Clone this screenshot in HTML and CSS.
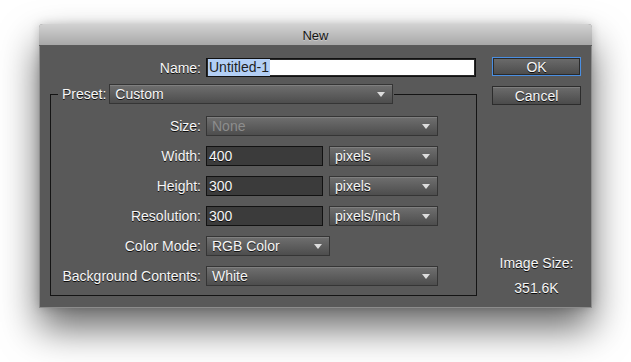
FILE: index.html
```html
<!DOCTYPE html>
<html lang="en">
<head>
    <meta charset="UTF-8">
    <meta name="viewport" content="width=device-width, initial-scale=1.0">
    <title>New</title>
    <link rel="stylesheet" href="styles.css">
</head>
<body>
    <div class="stage">
        <div class="dialog">
            <div class="titlebar">New</div>
            <div class="dialog-body">
                <div class="form">
                    <div class="name-row">
                        <label class="label">Name:</label>
                        <div class="text-field"><span class="selection">Untitled-1</span></div>
                    </div>
                    <fieldset class="preset">
                        <legend class="preset-legend">
                            <span class="legend-label">Preset:</span>
                            <div class="select select-preset"><span class="value">Custom</span><span class="arrow"></span></div>
                        </legend>
                        <div class="row">
                            <label class="label">Size:</label>
                            <div class="select select-wide disabled"><span class="value">None</span><span class="arrow"></span></div>
                        </div>
                        <div class="row">
                            <label class="label">Width:</label>
                            <div class="num-field">400</div>
                            <div class="select select-unit"><span class="value">pixels</span><span class="arrow"></span></div>
                        </div>
                        <div class="row">
                            <label class="label">Height:</label>
                            <div class="num-field">300</div>
                            <div class="select select-unit"><span class="value">pixels</span><span class="arrow"></span></div>
                        </div>
                        <div class="row">
                            <label class="label">Resolution:</label>
                            <div class="num-field">300</div>
                            <div class="select select-unit"><span class="value">pixels/inch</span><span class="arrow"></span></div>
                        </div>
                        <div class="row">
                            <label class="label">Color Mode:</label>
                            <div class="select select-mode"><span class="value">RGB Color</span><span class="arrow"></span></div>
                        </div>
                        <div class="row">
                            <label class="label">Background Contents:</label>
                            <div class="select select-wide"><span class="value">White</span><span class="arrow"></span></div>
                        </div>
                    </fieldset>
                </div>
                <div class="side">
                    <button class="btn btn-default">OK</button>
                    <button class="btn">Cancel</button>
                    <div class="image-size">
                        <div>Image Size:</div>
                        <div>351.6K</div>
                    </div>
                </div>
            </div>
        </div>
    </div>
</body>
</html>
```

FILE: styles.css
```css
html, body {
    height: 100%;
}
body {
    margin: 0;
    background-color: #fff;
    font-family: "Liberation Sans", Arial, sans-serif;
    font-size: 14px;
    color: #f7f7f7;
    overflow: hidden;
}
.stage {
    box-sizing: border-box;
    height: 362px;
    padding: 24px 0 0 39px;
}
.dialog {
    box-sizing: border-box;
    width: 553px;
    height: 284px;
    display: flex;
    flex-direction: column;
    background-color: #595959;
    border: 1px solid #8c8c8c;
    border-top: none;
    border-radius: 4px 4px 0 0;
    box-shadow: 0 20px 38px rgba(0, 0, 0, 0.6), 0 0 10px rgba(0, 0, 0, 0.18);
}
.titlebar {
    height: 22px;
    line-height: 23px;
    margin: 0 -1px;
    text-align: center;
    font-size: 13px;
    color: #141414;
    text-shadow: 0 1px 0 rgba(255, 255, 255, 0.35);
    background: linear-gradient(#d2d2d2, #a8a8a8);
    border-radius: 4px 4px 0 0;
    border-bottom: 1px solid #5a5a5a;
    box-sizing: border-box;
}
.dialog-body {
    flex: 1;
    display: flex;
    gap: 15px;
    padding: 11px 10px 6px 10px;
}
.form {
    width: 427px;
}
.label {
    text-align: right;
    text-shadow: 0 1px 0 rgba(0, 0, 0, 0.85);
    white-space: nowrap;
}
.name-row {
    display: flex;
    align-items: center;
    gap: 5px;
    margin-top: 1px;
    height: 19px;
}
.name-row .label {
    width: 151px;
}
.text-field {
    box-sizing: border-box;
    width: 270px;
    height: 19px;
    line-height: 17px;
    padding-left: 1px;
    background-color: #fff;
    border: 1px solid #111;
    box-shadow: inset 0 0 0 1px #2a2a2a;
    color: #1f1f1f;
}
.selection {
    display: inline-block;
    background-color: #b3cff5;
    padding: 0 1px;
}
.preset {
    margin: 7px 0 0;
    padding: 12px 0 9px;
    border: 1px solid #141414;
    display: flex;
    flex-direction: column;
    gap: 10px;
}
.preset-legend {
    display: flex;
    align-items: center;
    gap: 3px;
    margin-left: 7px;
    padding: 0 1px 0 4px;
}
.legend-label {
    text-shadow: 0 1px 0 rgba(0, 0, 0, 0.85);
}
.row {
    display: flex;
    align-items: center;
    height: 20px;
}
.row .label {
    width: 150px;
    margin-right: 5px;
}
.select {
    box-sizing: border-box;
    height: 20px;
    display: flex;
    align-items: center;
    padding: 0 7px 0 5px;
    background: linear-gradient(#6f6f6f, #4d4d4d);
    border: 1px solid #353535;
    box-shadow: inset 0 1px 0 rgba(255, 255, 255, 0.12);
    text-shadow: 0 1px 0 rgba(0, 0, 0, 0.8);
}
.select .value {
    flex: 1;
    white-space: nowrap;
}
.select .arrow {
    width: 0;
    height: 0;
    border-left: 4px solid transparent;
    border-right: 4px solid transparent;
    border-top: 5px solid #dcdcdc;
    margin-top: 1px;
}
.select-preset {
    width: 284px;
}
.select-wide {
    width: 232px;
}
.select-unit {
    width: 109px;
    margin-left: 6px;
}
.select-mode {
    width: 124px;
}
.disabled .value {
    color: #8d8d8d;
    text-shadow: none;
}
.num-field {
    box-sizing: border-box;
    width: 117px;
    height: 20px;
    line-height: 18px;
    padding-left: 2px;
    background-color: #3b3b3b;
    border: 1px solid #121212;
    text-shadow: 0 1px 0 rgba(0, 0, 0, 0.8);
}
.side {
    width: 89px;
    display: flex;
    flex-direction: column;
    gap: 10px;
}
.btn {
    box-sizing: border-box;
    height: 19px;
    padding: 0;
    font-family: inherit;
    font-size: 14px;
    color: #f7f7f7;
    text-shadow: 0 1px 0 rgba(0, 0, 0, 0.85);
    background: linear-gradient(#6c6c6c, #4b4b4b);
    border: 1px solid #2c2c2c;
    box-shadow: inset 0 1px 0 rgba(255, 255, 255, 0.12);
    cursor: pointer;
}
.btn-default {
    border-color: #4a8fe3;
    box-shadow: inset 0 0 0 1px #2a2a2a;
}
.image-size {
    margin-top: auto;
    text-align: center;
    line-height: 25px;
    text-shadow: 0 1px 0 rgba(0, 0, 0, 0.85);
}
```
